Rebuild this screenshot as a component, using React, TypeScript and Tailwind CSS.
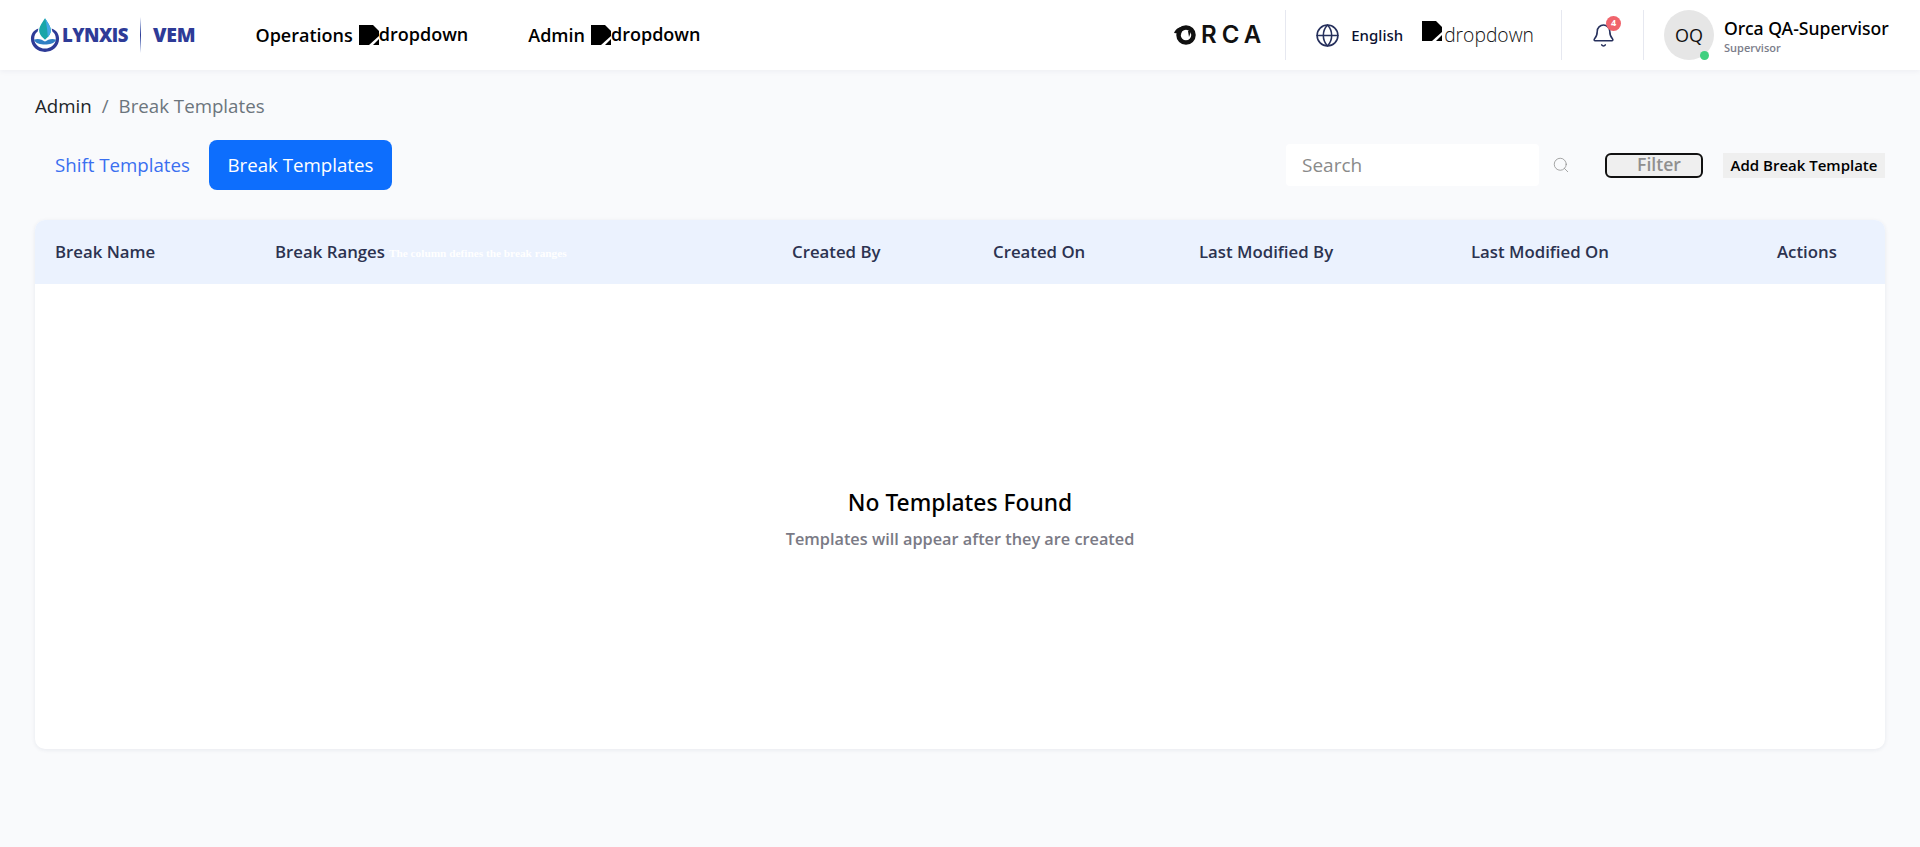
import { Bell, Globe, Search } from 'lucide-react';

const columns = [
  'Break Name',
  'Break Ranges',
  'Created By',
  'Created On',
  'Last Modified By',
  'Last Modified On',
  'Actions',
];

const BrokenImage = () => (
  <svg width="20" height="20" viewBox="0 0 20 20" className="shrink-0">
    <path d="M0 0H14L20 6V11L10 20H0Z" fill="#000" />
    <path d="M14 20L20 14V20Z" fill="#000" />
  </svg>
);

const LynxisLogo = () => (
  <div className="flex items-center">
    <svg width="30" height="38" viewBox="0 0 32 38">
      <path d="M16 1C12 7 9 11 10 16C11 20 14 22 16 24C18 22 21 20 22 16C23 11 20 7 16 1Z" fill="#19a6a8" />
      <path d="M16 1C20 7 23 11 22 16C21.500 18 20.500 19.500 19 21C18.500 14 18 8 16 1Z" fill="#45a8e6" />
      <path d="M9 12C3.500 14 1 18 1 23C1 31 8 37 16 37C24 37 31 31 31 23C31 18 28.500 14 23 12L24 15.500C26.500 17 27.500 20 27.500 23C27.500 29 22 33.500 16 33.500C10 33.500 4.500 29 4.500 23C4.500 20 5.500 17 8 15.500Z" fill="#2e3b97" />
      <path d="M4 24C9 22 13 24 16 26C19 24 23 22 28 24C26 28 21 29 16 29C11 29 6 28 4 24Z" fill="#2f7fc4" />
    </svg>
    <span className="ml-[2px] text-[18.500px] leading-none font-extrabold tracking-[-0.5px] text-[#2e3b97]">
      LYNXIS
    </span>
    <div className="mx-[12px] h-[36px] w-px bg-gradient-to-b from-white via-[#2e3b97] to-white" />
    <span className="text-[19.500px] leading-none font-extrabold tracking-[-0.2px] text-[#2e3b97]">
      VEM
    </span>
  </div>
);

const OrcaLogo = () => (
  <div className="flex items-center">
    <svg width="24" height="20" viewBox="0 0 24 20">
      <circle cx="13" cy="10" r="7.500" fill="none" stroke="#111" strokeWidth="4.500" />
      <path d="M1 8C3 3 8 1 13 1C10 3 8 6 8 10C6 9 4 8 1 8Z" fill="#111" />
      <path d="M15 6L19 4L16 12Z" fill="#111" />
    </svg>
    <span className="ml-[4px] font-['Inter',sans-serif] text-[24px] leading-none font-semibold tracking-[5px] text-[#111]">
      RCA
    </span>
  </div>
);

const NavMenu = ({ label }: { label: string }) => (
  <button className="flex h-[30px] items-center text-[18px] font-semibold text-black">
    <span>{label}</span>
    <span className="ml-[6px] flex items-center">
      <BrokenImage />
      <span className="-mt-[2px]">dropdown</span>
    </span>
  </button>
);

const Header = () => (
  <header className="flex h-[70px] items-center justify-between bg-white px-[30px] shadow-[0_1px_6px_rgba(30,40,80,0.06)]">
    <div className="flex items-center">
      <LynxisLogo />
      <nav className="ml-[60px] flex items-center gap-[60px]">
        <NavMenu label="Operations" />
        <NavMenu label="Admin" />
      </nav>
    </div>
    <div className="flex items-center">
      <OrcaLogo />
      <div className="ml-[19px] h-[50px] w-px bg-[#e6e8f0]" />
      <Globe size={25} strokeWidth={1.500} className="ml-[29px] text-[#26305c]" />
      <span className="ml-[11px] font-['Noto_Sans',sans-serif] text-[15px] font-medium text-[#0b1030]">
        English
      </span>
      <div className="ml-[19px] flex items-center">
        <div className="-mt-[8px]">
          <BrokenImage />
        </div>
        <span className="ml-[2px] text-[19.300px] font-light text-[#111]">dropdown</span>
      </div>
      <div className="ml-[27px] h-[50px] w-px bg-[#e6e8f0]" />
      <div className="relative ml-[29px]">
        <Bell size={25} strokeWidth={1.500} className="text-[#26305c]" />
        <span className="absolute -top-[7px] left-[15px] flex h-[15px] w-[15px] items-center justify-center rounded-full bg-[#f0646c] text-[9px] font-bold text-white">
          4
        </span>
      </div>
      <div className="ml-[27px] h-[50px] w-px bg-[#e6e8f0]" />
      <div className="relative ml-[20px] flex h-[50px] w-[50px] items-center justify-center rounded-full bg-[#e6e6e6] text-[18px] text-[#111]">
        OQ
        <span className="absolute right-[5px] bottom-0 h-[9px] w-[9px] rounded-full bg-[#3fd07f]" />
      </div>
      <div className="ml-[10px] flex w-[166px] flex-col whitespace-nowrap">
        <span className="font-['Noto_Sans',sans-serif] text-[17.600px] leading-[24px] font-medium text-black">
          Orca QA-Supervisor
        </span>
        <span className="mt-[1px] text-[11px] leading-[14px] font-semibold text-[#7b7d8a]">Supervisor</span>
      </div>
    </div>
  </header>
);

const Toolbar = () => (
  <div className="mt-[21px] flex items-center justify-between">
    <div className="flex items-center">
      <button className="pr-[19px] pl-[20px] text-[18.700px] text-[#3a6ff0]">Shift Templates</button>
      <button className="h-[50px] w-[183px] rounded-[8px] bg-[#0d6efd] text-[18.700px] text-white">
        Break Templates
      </button>
    </div>
    <div className="flex items-center">
      <input
        placeholder="Search"
        className="h-[42px] w-[253px] rounded-[4px] bg-white px-[16px] text-[19px] font-medium outline-none placeholder:text-[#8a8a8a]"
      />
      <Search size={18} strokeWidth={1} className="ml-[13px] text-[#8a8a8a]" />
      <button className="ml-[35px] h-[25px] w-[98px] rounded-[6px] border-2 border-[#111] bg-[#efefef] pl-[10px] text-[17.600px] leading-none font-semibold text-[#8f8f8f]">
        Filter
      </button>
      <button className="ml-[20px] h-[25px] w-[162px] bg-[#efefef] text-[15px] leading-none font-semibold whitespace-nowrap text-black">
        Add Break Template
      </button>
    </div>
  </div>
);

const TemplatesTable = () => (
  <div className="mt-[30px] overflow-hidden rounded-[10px] bg-white shadow-[0_1px_4px_rgba(30,40,80,0.08)]">
    <div className="grid h-[64px] grid-cols-[220px_517px_201px_206px_272px_306px_1fr] items-center bg-[#ebf2fe] pl-[20px] text-[16.800px] font-semibold text-[#2c3350]">
      {columns.map((column) => (
        <div key={column} className="flex items-center whitespace-nowrap">
          {column}
          {column === 'Break Ranges' && (
            <span className="mt-[3px] ml-[4px] font-['Liberation_Serif',serif] text-[11.300px] font-bold text-white">
              The column defines the break ranges
            </span>
          )}
        </div>
      ))}
    </div>
    <div className="flex h-[465px] flex-col items-center justify-center pt-[5px]">
      <h2 className="font-['Noto_Sans',sans-serif] text-[22.800px] leading-[30px] font-medium text-black">
        No Templates Found
      </h2>
      <p className="mt-[9px] text-[16.300px] leading-[24px] font-semibold text-[#7a7a85]">
        Templates will appear after they are created
      </p>
    </div>
  </div>
);

export default function App() {
  return (
    <div className="min-h-[847px] bg-[#f9fafc] font-['Open_Sans','Noto_Sans',sans-serif]">
      <Header />
      <main className="px-[35px]">
        <div className="flex items-center pt-[22px] text-[18.700px] leading-[27px]">
          <span className="text-[#212529]">Admin</span>
          <span className="mx-[10px] text-[#6c757d]">/</span>
          <span className="text-[#6c757d]">Break Templates</span>
        </div>
        <Toolbar />
        <TemplatesTable />
      </main>
    </div>
  );
}
